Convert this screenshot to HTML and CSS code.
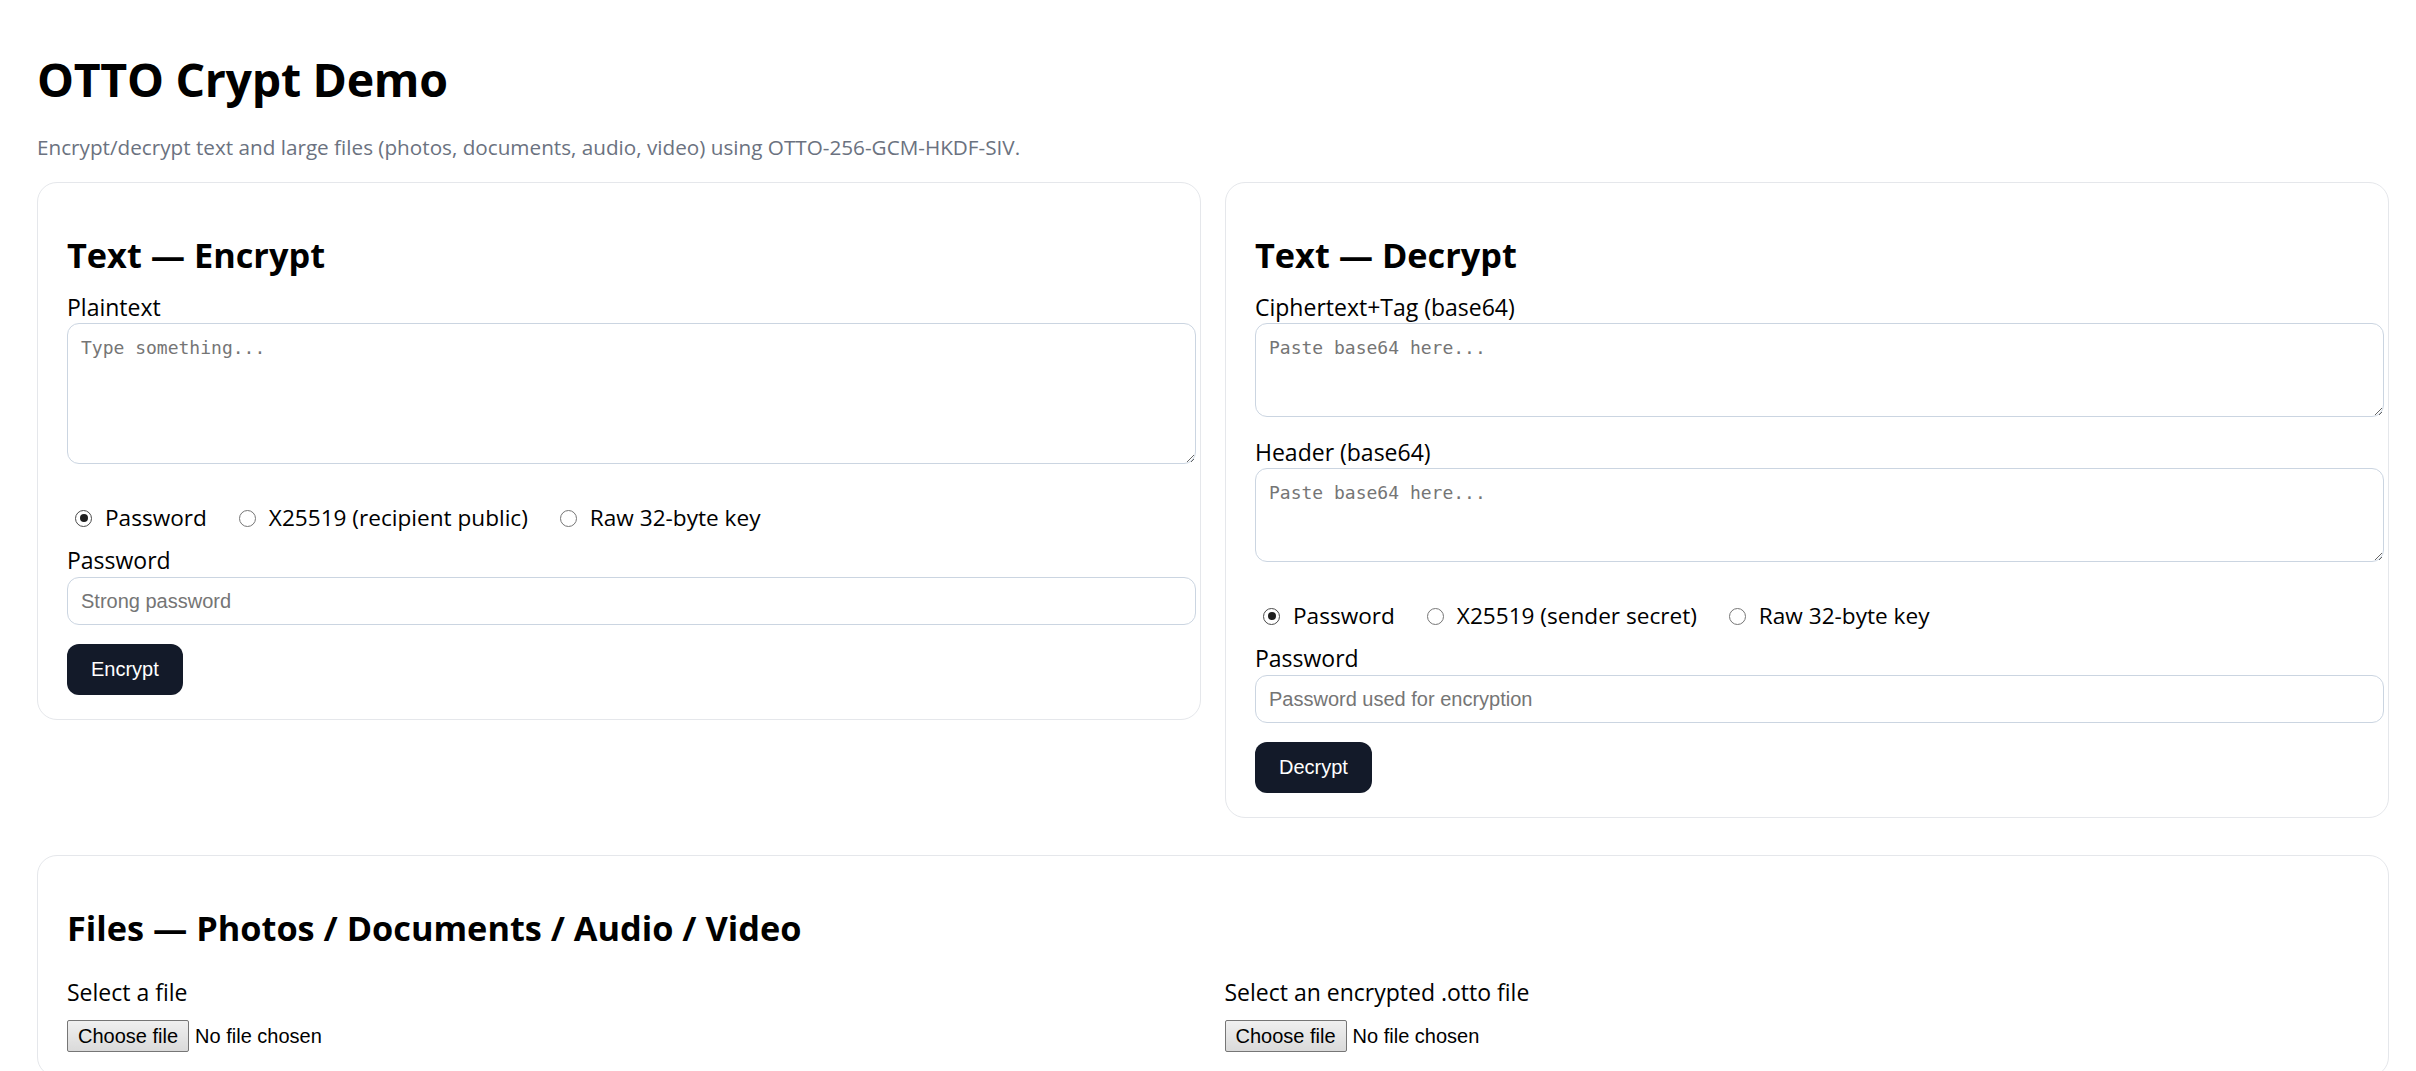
FILE: index.html
```html
<!DOCTYPE html>
<html lang="en">
<head>
<meta charset="utf-8">
<title>OTTO Crypt Demo</title>
<link rel="stylesheet" href="styles.css">
</head>
<body>
<header class="page-head">
  <h1 class="title">OTTO Crypt Demo</h1>
  <p class="subtitle">Encrypt/decrypt text and large files (photos, documents, audio, video) using OTTO-256-GCM-HKDF-SIV.</p>
</header>

<main class="cols">
  <section class="card">
    <h2 class="card-title">Text — Encrypt</h2>
    <label class="field-label" for="pt">Plaintext</label>
    <textarea id="pt" class="area area-tall" placeholder="Type something..."></textarea>
    <div class="radios">
      <label class="radio"><input type="radio" name="encmode" checked><span>Password</span></label>
      <label class="radio"><input type="radio" name="encmode"><span>X25519 (recipient public)</span></label>
      <label class="radio"><input type="radio" name="encmode"><span>Raw 32-byte key</span></label>
    </div>
    <label class="field-label" for="encpw">Password</label>
    <input id="encpw" class="text-input" type="password" placeholder="Strong password">
    <div class="actions"><button class="btn" type="button">Encrypt</button></div>
  </section>

  <section class="card">
    <h2 class="card-title">Text — Decrypt</h2>
    <label class="field-label" for="ct">Ciphertext+Tag (base64)</label>
    <textarea id="ct" class="area area-short" placeholder="Paste base64 here..."></textarea>
    <label class="field-label gap-top" for="hd">Header (base64)</label>
    <textarea id="hd" class="area area-short" placeholder="Paste base64 here..."></textarea>
    <div class="radios">
      <label class="radio"><input type="radio" name="decmode" checked><span>Password</span></label>
      <label class="radio"><input type="radio" name="decmode"><span>X25519 (sender secret)</span></label>
      <label class="radio"><input type="radio" name="decmode"><span>Raw 32-byte key</span></label>
    </div>
    <label class="field-label" for="decpw">Password</label>
    <input id="decpw" class="text-input" type="password" placeholder="Password used for encryption">
    <div class="actions"><button class="btn" type="button">Decrypt</button></div>
  </section>
</main>

<section class="card files">
  <h2 class="card-title">Files — Photos / Documents / Audio / Video</h2>
  <div class="file-cols">
    <div class="file-col">
      <span class="field-label">Select a file</span>
      <div class="file-control">
        <label class="file-btn"><input class="file-hidden" type="file">Choose file</label>
        <span class="file-name">No file chosen</span>
      </div>
    </div>
    <div class="file-col">
      <span class="field-label">Select an encrypted .otto file</span>
      <div class="file-control">
        <label class="file-btn"><input class="file-hidden" type="file" accept=".otto">Choose file</label>
        <span class="file-name">No file chosen</span>
      </div>
    </div>
  </div>
</section>
</body>
</html>
```

FILE: styles.css
```css
html, body {
  background: #ffffff;
}

body {
  margin: 0;
  padding: 51px 27px 0 37px;
  font-family: "Open Sans", "Noto Sans", sans-serif;
  color: #000000;
}

.page-head {
  display: flex;
  flex-direction: column;
}

.title {
  margin: 0;
  font-size: 46.5px;
  line-height: 56px;
  font-weight: 700;
  letter-spacing: -0.3px;
}

.subtitle {
  margin: 26px 0 0;
  font-size: 20.7px;
  line-height: 28px;
  color: #6b7280;
}

.cols {
  margin-top: 21px;
  display: grid;
  grid-template-columns: 1fr 1fr;
  gap: 24px;
  align-items: start;
}

.card {
  border: 1px solid #e5e7eb;
  border-radius: 20px;
  padding: 24px 30px 24px 29px;
  display: flex;
  flex-direction: column;
  align-items: stretch;
}

.card-title {
  margin: 26px 0 14px;
  font-size: 34.3px;
  line-height: 44px;
  font-weight: 700;
}

.field-label {
  display: block;
  font-size: 23px;
  line-height: 32px;
}

.gap-top {
  margin-top: 19px;
}

.area {
  display: block;
  box-sizing: border-box;
  width: calc(100% + 26px);
  border: 1px solid #cbd5e1;
  border-radius: 12px;
  padding: 12px 13px;
  font-family: "DejaVu Sans Mono", "Liberation Mono", monospace;
  font-size: 18px;
  line-height: 24px;
  resize: vertical;
  background: #fff;
}

.area::placeholder {
  color: #757575;
}

.area-tall {
  height: 141px;
}

.area-short {
  height: 94px;
}

.radios {
  margin: 38px 0 10px;
  height: 32px;
  display: flex;
  align-items: center;
  gap: 24px;
}

.radio {
  display: inline-flex;
  align-items: center;
  gap: 13px;
  font-size: 22.6px;
  line-height: 32px;
}

.radio input {
  appearance: none;
  -webkit-appearance: none;
  margin: 0 0 0 8px;
  width: 17px;
  height: 17px;
  border: 1.5px solid #767676;
  border-radius: 50%;
  box-sizing: border-box;
  display: grid;
  place-items: center;
  background: #fff;
}

.radio input:checked {
  border-color: #4a4a4a;
}

.radio input:checked::after {
  content: "";
  width: 8px;
  height: 8px;
  border-radius: 50%;
  background: #1f1f1f;
}

.text-input {
  display: block;
  box-sizing: border-box;
  width: calc(100% + 26px);
  height: 48px;
  margin-top: 1px;
  border: 1px solid #cbd5e1;
  border-radius: 12px;
  padding: 0 13px;
  font-family: "Liberation Sans", Arial, sans-serif;
  font-size: 20px;
  background: #fff;
}

.text-input::placeholder {
  color: #757575;
}

.actions {
  margin-top: 19px;
  display: flex;
}

.btn {
  height: 51px;
  padding: 0 24px;
  border: none;
  border-radius: 12px;
  background: #131a29;
  color: #ffffff;
  font-family: "Liberation Sans", Arial, sans-serif;
  font-size: 20px;
}

.files {
  margin-top: 37px;
}

.files .card-title {
  margin-bottom: 26px;
}

.file-cols {
  display: grid;
  grid-template-columns: 1fr 1fr;
  gap: 24px;
}

.file-col {
  display: flex;
  flex-direction: column;
  align-items: flex-start;
  gap: 12px;
}

.file-control {
  display: flex;
  align-items: center;
  gap: 6px;
  font-family: "Liberation Sans", Arial, sans-serif;
  font-size: 20px;
  color: #000;
}

.file-hidden {
  display: none;
}

.file-btn {
  box-sizing: border-box;
  height: 32px;
  padding: 0 10px;
  display: inline-flex;
  align-items: center;
  border: 1px solid #767676;
  border-radius: 2px;
  background: linear-gradient(#f0f0f0, #dadada);
  color: #000;
}

.file-name {
  line-height: 32px;
}
```
